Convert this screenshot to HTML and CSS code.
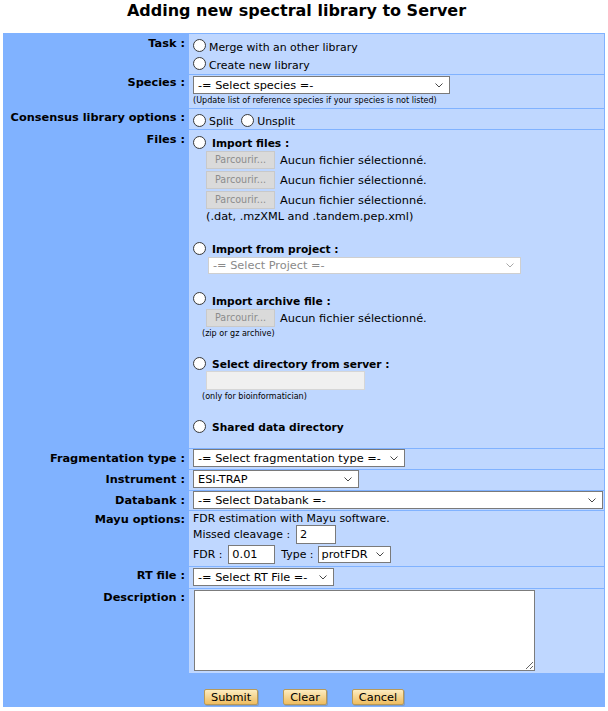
FILE: index.html
```html
<!DOCTYPE html>
<html lang="en">
<head>
<meta charset="utf-8">
<title>Adding new spectral library to Server</title>
<link rel="stylesheet" href="styles.css">
</head>
<body>
<h1 class="title">Adding new spectral library to Server</h1>
<form class="form">
  <div class="lbl">Task :</div>
  <div class="val val-task">
    <label class="opt"><input class="rd" type="radio" name="task"><span>Merge with an other library</span></label>
    <label class="opt"><input class="rd" type="radio" name="task"><span>Create new library</span></label>
  </div>

  <div class="lbl lbl-p0">Species :</div>
  <div class="val val-species">
    <div class="sel w-species"><span>-= Select species =-</span><svg class="chev" viewBox="0 0 8 5"><path d="M0.5 0.5 L4 4 L7.5 0.5"/></svg></div>
    <div class="note-b">(Update list of reference species if your species is not listed)</div>
  </div>

  <div class="lbl lbl-p1">Consensus library options :</div>
  <div class="val val-cons">
    <label class="opt"><input class="rd" type="radio" name="cons"><span>Split</span></label>
    <label class="opt"><input class="rd" type="radio" name="cons"><span>Unsplit</span></label>
  </div>

  <div class="lbl">Files :</div>
  <div class="val val-files">
    <label class="opt opt-b"><input class="rd" type="radio" name="files"><span>Import files :</span></label>
    <div class="file"><span class="browse">Parcourir...</span><span>Aucun fichier sélectionné.</span></div>
    <div class="file"><span class="browse">Parcourir...</span><span>Aucun fichier sélectionné.</span></div>
    <div class="file"><span class="browse">Parcourir...</span><span>Aucun fichier sélectionné.</span></div>
    <div class="ext">(.dat, .mzXML and .tandem.pep.xml)</div>

    <label class="opt opt-b gap-top gap-top-1"><input class="rd" type="radio" name="files"><span>Import from project :</span></label>
    <div class="sel sel-off w-project"><span>-= Select Project =-</span><svg class="chev" viewBox="0 0 8 5"><path d="M0.5 0.5 L4 4 L7.5 0.5"/></svg></div>

    <label class="opt opt-b opt-low gap-top"><input class="rd" type="radio" name="files"><span>Import archive file :</span></label>
    <div class="file"><span class="browse">Parcourir...</span><span>Aucun fichier sélectionné.</span></div>
    <div class="tiny">(zip or gz archive)</div>

    <label class="opt opt-b gap-top"><input class="rd" type="radio" name="files"><span>Select directory from server :</span></label>
    <div class="dir"></div>
    <div class="tiny">(only for bioinformatician)</div>

    <label class="opt opt-b gap-top"><input class="rd" type="radio" name="files"><span>Shared data directory</span></label>
  </div>

  <div class="lbl">Fragmentation type :</div>
  <div class="val">
    <div class="sel w-frag"><span>-= Select fragmentation type =-</span><svg class="chev" viewBox="0 0 8 5"><path d="M0.5 0.5 L4 4 L7.5 0.5"/></svg></div>
  </div>

  <div class="lbl">Instrument :</div>
  <div class="val">
    <div class="sel w-instr"><span>ESI-TRAP</span><svg class="chev" viewBox="0 0 8 5"><path d="M0.5 0.5 L4 4 L7.5 0.5"/></svg></div>
  </div>

  <div class="lbl">Databank :</div>
  <div class="val">
    <div class="sel w-bank"><span>-= Select Databank =-</span><svg class="chev" viewBox="0 0 8 5"><path d="M0.5 0.5 L4 4 L7.5 0.5"/></svg></div>
  </div>

  <div class="lbl lbl-p1">Mayu options:</div>
  <div class="val val-mayu">
    <div class="mline">FDR estimation with Mayu software.</div>
    <div class="mrow">Missed cleavage :<span class="txt w-mc">2</span></div>
    <div class="mrow mrow-2">FDR :<span class="txt w-fdr">0.01</span><span class="type">Type :</span><div class="sel sel-sm w-type"><span>protFDR</span><svg class="chev" viewBox="0 0 8 5"><path d="M0.5 0.5 L4 4 L7.5 0.5"/></svg></div></div>
  </div>

  <div class="lbl lbl-p1">RT file :</div>
  <div class="val val-p1">
    <div class="sel w-rt"><span>-= Select RT File =-</span><svg class="chev" viewBox="0 0 8 5"><path d="M0.5 0.5 L4 4 L7.5 0.5"/></svg></div>
  </div>

  <div class="lbl lbl-p1">Description :</div>
  <div class="val">
    <textarea class="desc"></textarea>
  </div>

  <div class="actions">
    <button type="button" class="btn">Submit</button>
    <button type="button" class="btn">Clear</button>
    <button type="button" class="btn">Cancel</button>
  </div>
</form>
</body>
</html>
```
FILE: styles.css
```css
html, body {
  margin: 0;
  background: #ffffff;
}
body {
  padding: 0 3px;
  font-family: "DejaVu Sans", Verdana, sans-serif;
  color: #000;
}
.title {
  margin: 0 0 12px;
  padding: 1px 15px 0 0;
  font-size: 16px;
  line-height: 20px;
  font-weight: bold;
  text-align: center;
}
.form {
  display: grid;
  grid-template-columns: 184px 1fr;
  grid-template-rows: 40px 33px 20px 318px 20px 20px 19px 55px 21px 84px 32px;
  gap: 1px;
  padding: 1px;
  background: #80b2ff;
}
.lbl {
  font-size: 11.33px;
  font-weight: bold;
  line-height: 14px;
  text-align: right;
  padding: 2px 3px 0 0;
  white-space: nowrap;
}
.lbl-p0 { padding-top: 0; }
.lbl-p1 { padding-top: 1px; }
.val {
  background: #bfd7ff;
  padding-left: 4px;
  font-size: 10.9px;
  line-height: 13px;
  min-width: 0;
}
.val-p1 { padding-top: 1px; }

/* radio options */
.opt {
  display: flex;
  align-items: flex-start;
  white-space: nowrap;
}
.opt span {
  margin: 1px 0 0 3px;
  line-height: 13px;
}
.rd {
  -webkit-appearance: none;
  appearance: none;
  flex: none;
  width: 13px;
  height: 13px;
  margin: 0;
  border: 1px solid #3b3b3b;
  border-radius: 50%;
  background: radial-gradient(circle at 50% 45%, #ffffff 55%, #ececec 100%);
  box-sizing: border-box;
}
.val-task { padding-top: 5px; }
.val-task .opt { height: 18px; }
.val-task .opt span { margin-top: 2px; }
.val-cons {
  display: flex;
  padding-top: 5px;
  gap: 8px;
}

/* select look-alike */
.sel {
  display: flex;
  align-items: center;
  justify-content: space-between;
  box-sizing: border-box;
  height: 18px;
  padding: 0 6px 0 4px;
  border: 1px solid #7a7a7a;
  background: #ffffff;
  font-size: 11.33px;
  white-space: nowrap;
}
.chev {
  flex: none;
  width: 8px;
  height: 5px;
}
.chev path {
  fill: none;
  stroke: #474747;
  stroke-width: 1;
}
.sel-off {
  height: 17px;
  border-color: #cfcfcf;
  color: #8a8a8a;
}
.sel-off .chev path { stroke: #a8a8a8; }
.sel-sm { height: 17px; }
.w-species { width: 257px; }
.w-project { width: 313px; margin: 1px 0 0 15px; }
.w-frag { width: 212px; }
.w-instr { width: 166px; }
.w-bank { width: 410px; }
.w-rt { width: 141px; }
.w-type { width: 73px; padding-left: 3px; }

.val-species { padding-top: 1px; }
.note-b {
  margin-top: 2px;
  font-size: 8.05px;
  line-height: 10px;
  white-space: nowrap;
}

/* files */
.val-files { padding-top: 6px; }
.opt-b span {
  margin-left: 6px;
  font-weight: bold;
  font-size: 10.67px;
}
.opt-low span { margin-top: 3px; }
.gap-top { margin-top: 18px; }
.gap-top-1 { margin-top: 19px; }
.file {
  display: flex;
  align-items: center;
  gap: 5px;
  height: 18px;
  margin: 1px 0 0 13px;
  font-size: 11.33px;
  white-space: nowrap;
}
.file + .file { margin-top: 2px; }
.browse {
  box-sizing: border-box;
  width: 69px;
  height: 18px;
  font-size: 9.6px;
  line-height: 16px;
  text-align: center;
  background: #dadada;
  border: 1px solid #c9c9c9;
  color: #8c8c8c;
}
.ext {
  margin: 1px 0 0 13px;
  font-size: 11.3px;
  white-space: nowrap;
}
.tiny {
  margin: 2px 0 0 9px;
  font-size: 8.05px;
  line-height: 10px;
  white-space: nowrap;
}
.dir {
  box-sizing: border-box;
  width: 159px;
  height: 19px;
  margin-left: 13px;
  background: #f0f0f0;
  border: 1px solid #d6d6d6;
}

/* mayu */
.val-mayu { padding-top: 1px; }
.mline { white-space: nowrap; }
.mrow {
  display: flex;
  align-items: center;
  height: 19px;
  white-space: nowrap;
}
.mrow-2 { margin-top: 1px; }
.txt {
  box-sizing: border-box;
  height: 19px;
  line-height: 17px;
  margin-left: 6px;
  padding: 0 3px;
  border: 1px solid #7a7a7a;
  background: #ffffff;
  font-size: 11.33px;
}
.w-mc { width: 40px; }
.w-fdr { width: 47px; }
.type { margin: 0 4px 0 6px; }

/* description */
.desc {
  display: block;
  box-sizing: border-box;
  width: 341px;
  height: 81px;
  margin: 1px 0 0 1px;
  border: 1px solid #7c7c7c;
  background: #ffffff;
  resize: both;
  font-family: "DejaVu Sans", Verdana, sans-serif;
}

/* actions */
.actions {
  grid-column: 1 / -1;
  display: flex;
  align-items: flex-start;
  gap: 25px;
  padding: 15px 0 0 200px;
}
.btn {
  box-sizing: border-box;
  height: 16px;
  margin: 0;
  padding: 0 6px;
  border: 1px solid #b99a58;
  border-radius: 2px;
  background: linear-gradient(#fdecc0, #efbd60);
  box-shadow: 1px 1px 0 rgba(120, 90, 30, 0.25);
  font-family: "DejaVu Sans", Verdana, sans-serif;
  font-size: 11.33px;
  line-height: 14px;
  color: #000;
}
```
